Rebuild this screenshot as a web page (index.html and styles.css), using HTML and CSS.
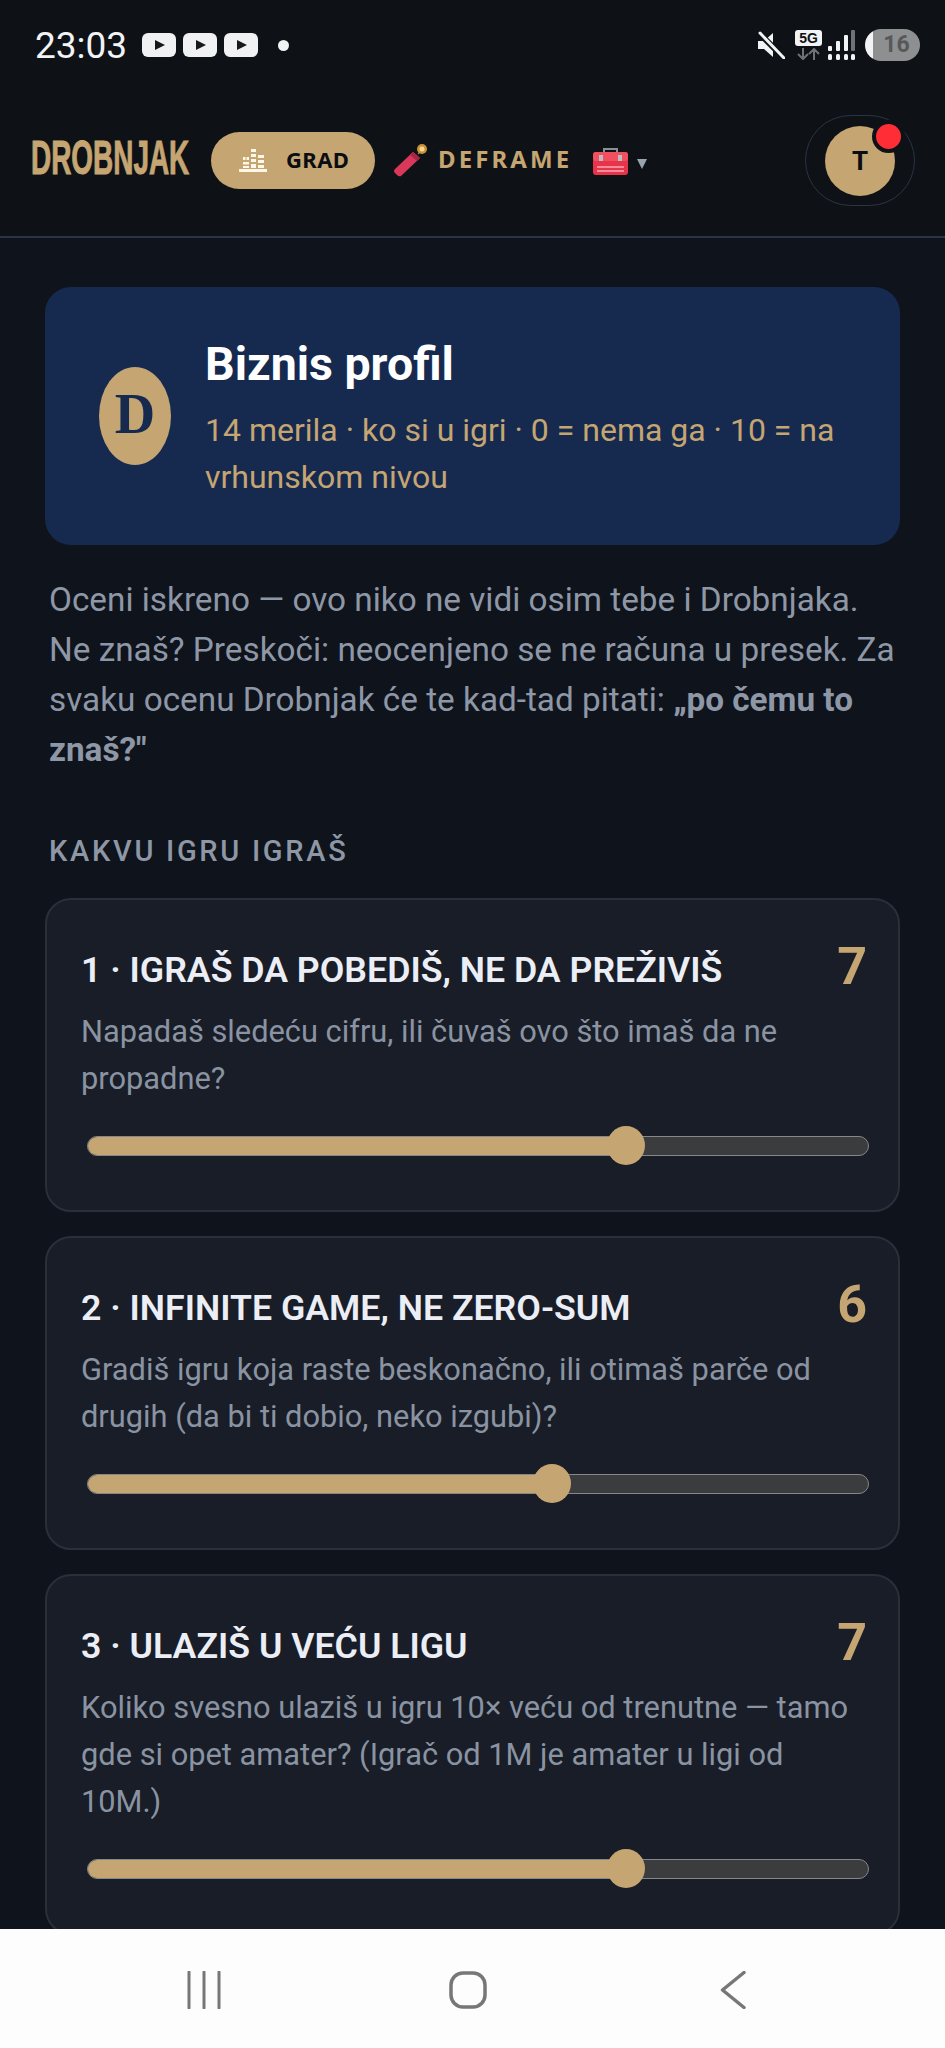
FILE: index.html
```html
<!DOCTYPE html>
<html lang="sr">
<head>
    <meta charset="UTF-8">
    <title>Biznis profil</title>
    <link rel="stylesheet" href="styles.css">
</head>
<body>
<div class="phone">
    <div class="status">
        <span class="time">23:03</span>
        <span class="yt"><svg viewBox="0 0 34 24"><path d="M13 7l10 5-10 5z"/></svg></span>
        <span class="yt"><svg viewBox="0 0 34 24"><path d="M13 7l10 5-10 5z"/></svg></span>
        <span class="yt"><svg viewBox="0 0 34 24"><path d="M13 7l10 5-10 5z"/></svg></span>
        <span class="dot"></span>
        <span class="status-right">
            <svg class="mute" viewBox="0 0 28 28"><path d="M1 10h6l9-8v24l-9-8H1z" fill="#f2f3f5"/><path d="M2 2l25 25" stroke="#0e1217" stroke-width="6"/><path d="M3 2l24 25" stroke="#f2f3f5" stroke-width="3" stroke-linecap="round"/></svg>
            <span class="net">
                <span class="five">5G</span>
                <svg class="arrows" viewBox="0 0 27 12"><path d="M8 0v10M3 6l5 5 5-5M19 12V2M14 6l5-5 5 5" fill="none" stroke="#6f7276" stroke-width="2"/></svg>
            </span>
            <svg class="signal" viewBox="0 0 27 30"><g fill="#f2f3f5"><rect x="0" y="16" width="4" height="5" rx="1"/><rect x="8" y="11" width="4" height="10" rx="1"/><rect x="16" y="5" width="4" height="16" rx="1"/><rect x="0" y="24" width="4" height="6" rx="1.5"/><rect x="8" y="24" width="4" height="6" rx="1.5"/><rect x="16" y="24" width="4" height="6" rx="1.5"/><rect x="23" y="24" width="4" height="6" rx="1.5"/></g><rect x="23" y="0" width="4" height="21" rx="1" fill="#6f7276"/></svg>
            <span class="battery">16</span>
        </span>
    </div>

    <header class="topbar">
        <span class="logo-box"><span class="logo">DROBNJAK</span></span>
        <a class="pill">
            <svg class="city" viewBox="0 0 28 23"><g fill="#fff8e8"><rect x="0" y="20" width="28" height="3"/><rect x="4" y="8" width="2.5" height="3"/><rect x="7.5" y="8" width="2.5" height="3"/><rect x="4" y="13" width="6" height="2.5"/><rect x="4" y="17" width="6" height="2"/><rect x="12" y="0" width="5" height="3"/><rect x="12" y="5" width="5" height="3"/><rect x="12" y="10" width="5" height="3"/><rect x="12" y="15" width="5" height="4"/><rect x="19" y="6" width="6" height="3"/><rect x="19" y="11" width="6" height="3"/><rect x="19" y="16" width="6" height="3"/></g></svg>
            <span class="pill-label">GRAD</span>
        </a>
        <svg class="cracker" viewBox="0 0 34 33"><path d="M24 10l6-6" stroke="#8d7b5b" stroke-width="1.5"/><circle cx="28" cy="5" r="5" fill="#c9923a"/><circle cx="28" cy="5" r="2.5" fill="#ffd98a"/><path d="M19 8l7 6L7 32q-2 1-4-1L1 29q-2-2 0-4z" fill="#d9385a"/><path d="M19 8l7 6-3 3-7-6z" fill="#a82844"/></svg>
        <a class="nav-link">DEFRAME</a>
        <svg class="toolbox" viewBox="0 0 35 28"><path d="M11 6V2h13v4" fill="none" stroke="#8a8f96" stroke-width="2"/><rect x="0" y="5" width="35" height="23" rx="3" fill="#e8344a"/><rect x="0" y="5" width="35" height="9" rx="3" fill="#f0505f"/><rect x="6" y="8" width="4" height="6" fill="#b9bec4"/><rect x="25" y="8" width="4" height="6" fill="#b9bec4"/><path d="M4 20h27M4 24h27" stroke="#f5a9b2" stroke-width="1.5"/></svg>
        <span class="caret"></span>
        <div class="account">
            <span class="avatar">T</span>
            <span class="badge"></span>
        </div>
    </header>

    <main class="content">
        <section class="hero">
            <span class="hero-mark">D</span>
            <div class="hero-text">
                <h1>Biznis profil</h1>
                <p>14 merila · ko si u igri · 0 = nema ga · 10 = na vrhunskom nivou</p>
            </div>
        </section>

        <p class="intro">Oceni iskreno — ovo niko ne vidi osim tebe i Drobnjaka. Ne znaš? Preskoči: neocenjeno se ne računa u presek. Za svaku ocenu Drobnjak će te kad-tad pitati: <b>„po čemu to znaš?"</b></p>

        <h2 class="section-title">KAKVU IGRU IGRAŠ</h2>

        <div class="cards">
            <article class="card">
                <div class="card-head">
                    <h3>1 · IGRAŠ DA POBEDIŠ, NE DA PREŽIVIŠ</h3>
                    <span class="score">7</span>
                </div>
                <p>Napadaš sledeću cifru, ili čuvaš ovo što imaš da ne propadne?</p>
                <div class="slider">
                    <div class="fill" style="width:calc(19px + (100% - 38px) * 0.7)"></div>
                    <div class="thumb" style="left:calc((100% - 38px) * 0.7)"></div>
                </div>
            </article>
            <article class="card">
                <div class="card-head">
                    <h3>2 · INFINITE GAME, NE ZERO-SUM</h3>
                    <span class="score">6</span>
                </div>
                <p>Gradiš igru koja raste beskonačno, ili otimaš parče od drugih (da bi ti dobio, neko izgubi)?</p>
                <div class="slider">
                    <div class="fill" style="width:calc(19px + (100% - 38px) * 0.6)"></div>
                    <div class="thumb" style="left:calc((100% - 38px) * 0.6)"></div>
                </div>
            </article>
            <article class="card">
                <div class="card-head">
                    <h3>3 · ULAZIŠ U VEĆU LIGU</h3>
                    <span class="score">7</span>
                </div>
                <p>Koliko svesno ulaziš u igru 10× veću od trenutne — tamo gde si opet amater? (Igrač od 1M je amater u ligi od 10M.)</p>
                <div class="slider">
                    <div class="fill" style="width:calc(19px + (100% - 38px) * 0.7)"></div>
                    <div class="thumb" style="left:calc((100% - 38px) * 0.7)"></div>
                </div>
            </article>
        </div>
    </main>

    <nav class="navbar">
        <svg class="nav-recent" viewBox="0 0 36 38"><path d="M3 1v36M18 1v36M33 1v36" stroke="#777" stroke-width="3" stroke-linecap="round"/></svg>
        <svg class="nav-home" viewBox="0 0 38 38"><rect x="2" y="2" width="34" height="34" rx="12" fill="none" stroke="#777" stroke-width="3.5"/></svg>
        <svg class="nav-back" viewBox="0 0 26 38"><path d="M24 1.5L2.5 19 24 36.500" fill="none" stroke="#777" stroke-width="3.500" stroke-linecap="round" stroke-linejoin="round"/></svg>
    </nav>
</div>
</body>
</html>
```

FILE: styles.css
```css
*{margin:0;padding:0;box-sizing:border-box;}
html,body{height:100%;background:#0f131c;}
body{font-family:Roboto,"Noto Sans",sans-serif;}
a{text-decoration:none;}
svg{display:block;flex:none;}

.phone{
    display:flex;
    flex-direction:column;
    width:945px;
    height:2048px;
    overflow:hidden;
}

/* status bar */
.status{
    display:flex;
    align-items:center;
    height:90px;
    padding:0 25px 0 35px;
    background:#0e1217;
    color:#f2f3f5;
}
.time{
    margin-right:15px;
    font-size:37px;
    line-height:1;
}
.yt{
    width:34px;
    height:24px;
    margin-right:7px;
    border-radius:6px;
    background:#f0f1f3;
}
.yt svg{width:34px;height:24px;fill:#15181c;}
.dot{
    width:11px;
    height:11px;
    margin-left:13px;
    border-radius:50%;
    background:#f2f3f5;
}
.status-right{
    display:flex;
    align-items:center;
    margin-left:auto;
}
.mute{width:28px;height:28px;margin-right:10px;}
.net{display:flex;flex-direction:column;align-items:center;margin-right:6px;}
.five{
    width:27px;
    height:16px;
    border-radius:3px;
    background:#f2f3f5;
    color:#0e1217;
    font:700 14px/16px "Liberation Sans",sans-serif;
    text-align:center;
}
.arrows{width:27px;height:12px;margin-top:2px;}
.signal{width:27px;height:30px;margin-right:10px;}
.battery{
    width:55px;
    height:32px;
    padding-left:8px;
    border-radius:16px;
    background:linear-gradient(90deg,#f2f3f5 8px,#8e8f90 8px);
    color:#56585a;
    font-size:23px;
    font-weight:700;
    line-height:32px;
    text-align:center;
}

/* top bar */
.topbar{
    display:flex;
    align-items:center;
    height:148px;
    padding:0 30px 5px 31px;
    background:#0e1217;
    border-bottom:2px solid #2a3446;
}
.logo-box{
    flex:none;
    width:158px;
    margin-right:22px;
    margin-bottom:6px;
}
.logo{
    display:block;
    width:278px;
    color:#c5a572;
    font:700 49px/1 "Liberation Sans",sans-serif;
    white-space:nowrap;
    -webkit-text-stroke:1px #c5a572;
    transform:scaleX(.57);
    transform-origin:left center;
}
.pill{
    display:flex;
    align-items:center;
    width:164px;
    height:57px;
    padding-left:28px;
    border-radius:29px;
    background:#c5a572;
    color:#0a0d11;
    font:700 22px/1 "Noto Sans",sans-serif;
    letter-spacing:.4px;
}
.pill-label{margin-bottom:4px;}
.city{width:28px;height:23px;margin-right:19px;}
.cracker{width:34px;height:33px;margin-left:19px;margin-right:10px;}
.nav-link{
    margin-bottom:3px;
    color:#c5a572;
    font:700 24px/1 "Noto Sans",sans-serif;
    letter-spacing:3.1px;
}
.toolbox{width:35px;height:28px;margin-left:21px;margin-right:9px;}
.caret{
    width:0;
    height:0;
    margin-top:6px;
    border-left:5px solid transparent;
    border-right:5px solid transparent;
    border-top:10px solid #9aa3ad;
}
.account{
    position:relative;
    display:flex;
    align-items:center;
    justify-content:center;
    width:110px;
    height:91px;
    margin-left:auto;
    border:1.5px solid #2a3446;
    border-radius:46px;
}
.avatar{
    width:70px;
    height:70px;
    border-radius:50%;
    background:#c5a572;
    color:#0a0d11;
    font-size:26px;
    font-weight:700;
    line-height:70px;
    text-align:center;
}
.badge{
    position:absolute;
    left:66px;
    top:4px;
    width:33px;
    height:33px;
    border:4px solid #0e1217;
    border-radius:50%;
    background:#ff2d35;
}

/* content */
.content{
    flex:1;
    min-height:0;
    overflow:hidden;
    padding:49px 45px 0;
}
.hero{
    display:flex;
    align-items:center;
    gap:34px;
    height:258px;
    padding:0 54px;
    border-radius:26px;
    background:#162a50;
}
.hero-mark{
    flex:none;
    width:72px;
    height:98px;
    border-radius:50%;
    background:#c5a572;
    color:#162a50;
    font:700 56px/94px "Liberation Serif",serif;
    text-align:center;
}
.hero-text{margin-top:3px;}
.hero-text h1{
    margin-bottom:13px;
    color:#fff;
    font-size:46.5px;
    font-weight:700;
    line-height:60px;
}
.hero-text p{
    color:#c5a572;
    font-size:32px;
    line-height:47px;
}
.intro{
    margin-top:30px;
    padding:0 0 0 4px;
    color:#8e97a6;
    font-size:33.3px;
    line-height:50px;
}
.intro b{font-weight:700;}
.section-title{
    margin-top:58px;
    padding:0 4px;
    color:#8e97a6;
    font-size:29px;
    font-weight:500;
    line-height:36px;
    letter-spacing:2.7px;
}
.cards{
    display:flex;
    flex-direction:column;
    gap:24px;
    margin-top:29px;
}
.card{
    padding:34px 34px 54px;
    border:2px solid #2a2f3a;
    border-radius:26px;
    background:#181d27;
}
.card-head{
    display:flex;
    align-items:flex-start;
    justify-content:space-between;
}
.card h3{
    margin-top:14px;
    color:#eceef5;
    font-size:35.7px;
    font-weight:600;
    line-height:44px;
}
.score{
    margin:5px -3px 0 0;
    color:#c5a572;
    font-size:52px;
    font-weight:700;
    line-height:56px;
}
.card p{
    margin-top:13px;
    color:#8a93a2;
    font-size:30.8px;
    line-height:47px;
}
.slider{
    position:relative;
    height:20px;
    margin:34px -5px 0 6px;
    border:1.5px solid #85878a;
    border-radius:10px;
    background:#3b3c3d;
}
.fill{
    height:100%;
    border-radius:10px;
    background:#c5a572;
}
.thumb{
    position:absolute;
    top:-11px;
    width:38px;
    height:39px;
    border-radius:50%;
    background:#c5a572;
}

/* android nav */
.navbar{
    flex:none;
    display:flex;
    align-items:center;
    height:119px;
    background:#fdfdfe;
    padding:3px 0 0 186px;
}
.nav-recent{width:36px;height:38px;margin-right:227px;}
.nav-home{width:38px;height:38px;margin-right:233px;}
.nav-back{width:26px;height:38px;}
```
